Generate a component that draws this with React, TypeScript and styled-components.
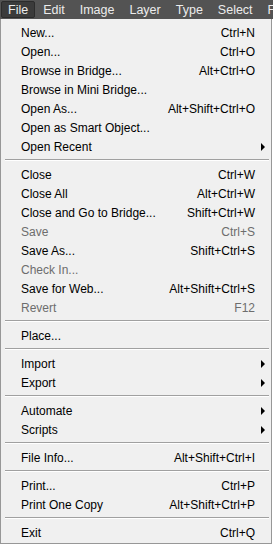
import styled, { createGlobalStyle } from "styled-components";

const colors = {
  bar: "#535353",
  barText: "#ececec",
  barActive: "#3b3b3b",
  menuBg: "#f0f0f0",
  border: "#979797",
  sep: "#a0a0a0",
  text: "#000000",
  disabled: "#6d6d6d",
};

const font = `"Liberation Sans", Arial, sans-serif`;

const GlobalStyle = createGlobalStyle`
  html, body {
    margin: 0;
    padding: 0;
    background: #ffffff;
  }
  * { box-sizing: border-box; }
`;

const Page = styled.div`
  width: 273px;
  height: 544px;
  overflow: hidden;
  font-family: ${font};
  display: flex;
  flex-direction: column;
`;

const MenuBar = styled.div`
  height: 19px;
  background: ${colors.bar};
  display: flex;
  align-items: center;
  padding-left: 1px;
  flex-shrink: 0;
  white-space: nowrap;
  overflow: hidden;
`;

const BarItem = styled.div<{ $active?: boolean }>`
  height: 17px;
  display: flex;
  align-items: center;
  padding: 0 6px;
  margin-right: 1px;
  color: ${colors.barText};
  font-size: 12.5px;
  border-radius: 2px;
  flex-shrink: 0;
  background: ${(p) => (p.$active ? colors.barActive : "transparent")};
  border: 1px solid ${(p) => (p.$active ? "#2c2c2c" : "transparent")};
`;

const Menu = styled.div`
  flex: 1;
  width: 272px;
  background: ${colors.menuBg};
  border: 1px solid ${colors.border};
  border-top: none;
  padding: 4px 2px 0 2px;
  display: flex;
  flex-direction: column;
`;

const Row = styled.div<{ $disabled?: boolean }>`
  height: 19px;
  flex-shrink: 0;
  display: flex;
  align-items: center;
  padding: 0 14px 0 18px;
  font-size: 12px;
  color: ${(p) => (p.$disabled ? colors.disabled : colors.text)};
  position: relative;
  white-space: nowrap;
`;

const Label = styled.span`
  flex: 1;
`;

const Shortcut = styled.span`
  text-align: right;
`;

const Arrow = styled.span`
  position: absolute;
  right: 4px;
  top: 50%;
  margin-top: -4px;
  width: 0;
  height: 0;
  border-top: 4px solid transparent;
  border-bottom: 4px solid transparent;
  border-left: 4px solid #000;
`;

const Separator = styled.div`
  height: 9px;
  flex-shrink: 0;
  padding: 3px 0 0 2px;
  &::before {
    content: "";
    display: block;
    height: 1px;
    background: ${colors.sep};
    box-shadow: 0 1px 0 #ffffff;
  }
`;

type Item =
  | { sep: true }
  | { label: string; shortcut?: string; disabled?: boolean; sub?: boolean };

const items: Item[] = [
  { label: "New...", shortcut: "Ctrl+N" },
  { label: "Open...", shortcut: "Ctrl+O" },
  { label: "Browse in Bridge...", shortcut: "Alt+Ctrl+O" },
  { label: "Browse in Mini Bridge..." },
  { label: "Open As...", shortcut: "Alt+Shift+Ctrl+O" },
  { label: "Open as Smart Object..." },
  { label: "Open Recent", sub: true },
  { sep: true },
  { label: "Close", shortcut: "Ctrl+W" },
  { label: "Close All", shortcut: "Alt+Ctrl+W" },
  { label: "Close and Go to Bridge...", shortcut: "Shift+Ctrl+W" },
  { label: "Save", shortcut: "Ctrl+S", disabled: true },
  { label: "Save As...", shortcut: "Shift+Ctrl+S" },
  { label: "Check In...", disabled: true },
  { label: "Save for Web...", shortcut: "Alt+Shift+Ctrl+S" },
  { label: "Revert", shortcut: "F12", disabled: true },
  { sep: true },
  { label: "Place..." },
  { sep: true },
  { label: "Import", sub: true },
  { label: "Export", sub: true },
  { sep: true },
  { label: "Automate", sub: true },
  { label: "Scripts", sub: true },
  { sep: true },
  { label: "File Info...", shortcut: "Alt+Shift+Ctrl+I" },
  { sep: true },
  { label: "Print...", shortcut: "Ctrl+P" },
  { label: "Print One Copy", shortcut: "Alt+Shift+Ctrl+P" },
  { sep: true },
  { label: "Exit", shortcut: "Ctrl+Q" },
];

const barItems = ["File", "Edit", "Image", "Layer", "Type", "Select", "Filter"];

export default function App() {
  return (
    <Page>
      <GlobalStyle />
      <MenuBar>
        {barItems.map((b, i) => (
          <BarItem key={b} $active={i === 0}>
            {b}
          </BarItem>
        ))}
      </MenuBar>
      <Menu>
        {items.map((it, i) =>
          "sep" in it ? (
            <Separator key={i} />
          ) : (
            <Row key={i} $disabled={it.disabled}>
              <Label>{it.label}</Label>
              {it.shortcut && <Shortcut>{it.shortcut}</Shortcut>}
              {it.sub && <Arrow />}
            </Row>
          ),
        )}
      </Menu>
    </Page>
  );
}
